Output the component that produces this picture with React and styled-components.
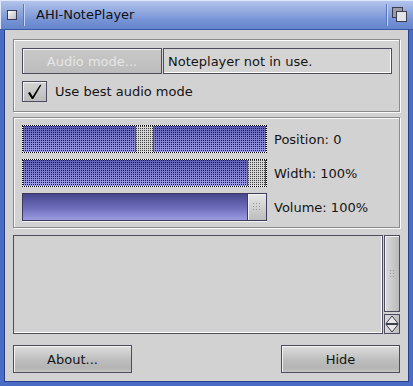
import React from "react";
import styled, { createGlobalStyle } from "styled-components";

const GlobalStyle = createGlobalStyle`
  html, body {
    margin: 0;
    padding: 0;
    overflow: hidden;
    background: #d2d2d2;
  }
  body {
    font-family: "DejaVu Sans", "Liberation Sans", sans-serif;
    font-size: 13px;
    color: #141414;
  }
`;

const dots = (color, size) =>
  `conic-gradient(from 270deg at 1px 1px, ${color} 25%, transparent 0) 0 0 / ${size}px ${size}px`;

const Window = styled.div`
  width: 413px;
  height: 386px;
  display: flex;
  flex-direction: column;
`;

const TitleBar = styled.div`
  flex: none;
  height: 30px;
  box-sizing: border-box;
  display: flex;
  align-items: center;
  background: linear-gradient(#b6c6ec, #7593d4 70%, #6585cc);
  border-bottom: 1px solid #3a58a6;
  box-shadow: inset 1px 1px 0 #dfe7fb;
`;

const GadgetSlot = styled.div`
  width: ${p => p.$w}px;
  height: 100%;
  display: flex;
  align-items: center;
  justify-content: center;
`;

const CloseBox = styled.div`
  width: 8px;
  height: 8px;
  border: 1px solid #3c3c50;
  background: linear-gradient(135deg, #ffffff, #b8b8c0);
`;

const TitleSep = styled.div`
  width: 1px;
  height: 22px;
  background: #5676c2;
  box-shadow: 1px 0 0 #c9d6f3;
`;

const Title = styled.div`
  flex: 1;
  padding-left: 12px;
  font-size: 13px;
  color: #101018;
`;

const Body = styled.div`
  flex: 1;
  display: flex;
  flex-direction: column;
  padding: 9px;
  background: #d2d2d2;
  border: 4px solid #4a6cc4;
  border-top: none;
  box-shadow: inset 1px 0 0 #28408c, inset -1px 0 0 #28408c, inset 0 -1px 0 #28408c;
`;

const Group = styled.div`
  border: 1px solid #8a8a8a;
  box-shadow: inset 1px 1px 0 #fafafa, 1px 1px 0 #fafafa;
  padding: ${p => p.$pad};
  margin-top: ${p => p.$mt || 0}px;
`;

const ModeGroup = styled(Group)`
  display: flex;
  flex-direction: column;
  gap: 7px;
`;

const ModeRow = styled.div`
  display: flex;
  gap: 1px;
  height: 26px;
`;

const Button = styled.button`
  width: ${p => p.$w}px;
  height: ${p => p.$h || 28}px;
  box-sizing: border-box;
  margin: 0;
  padding: 0;
  border: 1px solid #4c4c5e;
  background: linear-gradient(#dedede, #bdbdbd 55%, #b4b4b4 85%, #c6c6c6);
  box-shadow: inset 1px 1px 0 #f2f2f2;
  font-family: inherit;
  font-size: 13px;
  color: #141414;
  &:disabled {
    color: #e6e6e6;
    background: linear-gradient(#c8c8c8, #bcbcbc);
  }
`;

const TextField = styled.div`
  flex: 1;
  display: flex;
  align-items: center;
  padding-left: 4px;
  border: 1px solid #4c4c5e;
  box-shadow: inset -1px -1px 0 #ffffff;
  background: #d4d4d4;
`;

const CheckRow = styled.label`
  display: flex;
  align-items: center;
  gap: 8px;
  height: 21px;
`;

const CheckBox = styled.div`
  width: 25px;
  height: 21px;
  box-sizing: border-box;
  border: 1px solid #4c4c5e;
  box-shadow: inset 1px 1px 0 #f0f0f0;
  background: linear-gradient(#d4d4d4, #bcbcbc);
  display: flex;
  align-items: center;
  justify-content: center;
`;

const SliderGroup = styled(Group)`
  display: grid;
  grid-template-columns: 245px 1fr;
  grid-auto-rows: 28px;
  column-gap: 7px;
  row-gap: 6px;
`;

const DotTrack = styled.div`
  position: relative;
  box-sizing: border-box;
  border: 1px dotted #000;
  background: #ffffff;
`;

const DotFill = styled.div`
  position: absolute;
  inset: 0;
  background: ${dots("rgba(10,10,40,0.85)", 2)}, linear-gradient(#6262b6, #9c9ce6);
`;

const DotKnob = styled.div`
  position: absolute;
  top: 0;
  bottom: 0;
  width: 19px;
  box-sizing: border-box;
  border-left: 1px solid #505064;
  border-right: 1px solid #505064;
  background: ${dots("#3a3a3a", 2)}, #d8d8d8;
`;

const GaugeTrack = styled.div`
  position: relative;
  box-sizing: border-box;
  border: 1px solid #3c3c5a;
  background: linear-gradient(#46468e, #6e6ebc 55%, #9c9ce2);
  box-shadow: 0 1px 0 #f4f4f4;
`;

const GaugeKnob = styled.div`
  position: absolute;
  top: 0;
  bottom: 0;
  right: 0;
  width: 19px;
  box-sizing: border-box;
  border-left: 1px solid #3c3c5a;
  box-shadow: inset 1px 1px 0 #f4f4f4;
  background: linear-gradient(#e6e6e6, #bdbdbd);
  display: flex;
  align-items: center;
  justify-content: center;
`;

const Grip = styled.div`
  width: ${p => p.$w}px;
  height: ${p => p.$h}px;
  background: ${dots("#9a9a9a", 3)};
`;

const SliderLabel = styled.div`
  display: flex;
  align-items: center;
`;

const ListRow = styled.div`
  display: flex;
  gap: 1px;
  height: 99px;
  margin-top: 7px;
`;

const ListBox = styled.div`
  flex: 1;
  border: 1px solid #4c4c5e;
  box-shadow: inset -1px -1px 0 #ffffff;
  background: #d2d2d2;
`;

const ScrollBar = styled.div`
  width: 16px;
  display: flex;
  flex-direction: column;
  gap: 2px;
`;

const ScrollKnob = styled.div`
  flex: 1;
  box-sizing: border-box;
  border: 1px solid #4c4c5e;
  box-shadow: inset 1px 1px 0 #f0f0f0;
  background: linear-gradient(90deg, #dadada, #bababa);
  display: flex;
  align-items: center;
  justify-content: center;
`;

const ArrowBox = styled.div`
  height: 20px;
  box-sizing: border-box;
  border: 1px solid #4c4c5e;
  background: linear-gradient(90deg, #dadada, #bcbcbc);
  display: flex;
  align-items: center;
  justify-content: center;
`;

const ButtonRow = styled.div`
  display: flex;
  justify-content: space-between;
  margin-top: 11px;
`;

const sliders = [
  { kind: "dot", pos: 0.5, label: "Position: 0" },
  { kind: "dot", pos: 1, label: "Width: 100%" },
  { kind: "gauge", label: "Volume: 100%" }
];

export default function App() {
  return (
    <>
      <GlobalStyle />
      <Window>
        <TitleBar>
          <GadgetSlot $w={23}>
            <CloseBox />
          </GadgetSlot>
          <TitleSep />
          <Title>AHI-NotePlayer</Title>
          <TitleSep />
          <GadgetSlot $w={26}>
            <svg width="16" height="16" viewBox="0 0 16 16">
              <rect x="0.5" y="0.5" width="10" height="10" fill="#9c9ca6" stroke="#3c3c50" />
              <rect x="4.5" y="4.5" width="10" height="10" fill="#e4e4e8" stroke="#3c3c50" />
            </svg>
          </GadgetSlot>
        </TitleBar>
        <Body>
          <ModeGroup $pad="8px 7px 9px 8px">
            <ModeRow>
              <Button $w={140} $h={26} disabled>
                Audio mode...
              </Button>
              <TextField>Noteplayer not in use.</TextField>
            </ModeRow>
            <CheckRow>
              <CheckBox>
                <svg width="15" height="16" viewBox="0 0 15 16">
                  <path d="M1 9 L3 8 L5.6 12.6 L13.2 0.6 L14.2 1.2 L6.2 15 L4.8 15 Z" fill="#000" />
                </svg>
              </CheckBox>
              Use best audio mode
            </CheckRow>
          </ModeGroup>

          <SliderGroup $pad="7px 8px 6px 8px" $mt={5}>
            {sliders.map(s => (
              <React.Fragment key={s.label}>
                {s.kind === "dot" ? (
                  <DotTrack>
                    <DotFill />
                    <DotKnob style={{ left: `calc((100% - 19px) * ${s.pos})` }} />
                  </DotTrack>
                ) : (
                  <GaugeTrack>
                    <GaugeKnob>
                      <Grip $w={8} $h={8} />
                    </GaugeKnob>
                  </GaugeTrack>
                )}
                <SliderLabel>{s.label}</SliderLabel>
              </React.Fragment>
            ))}
          </SliderGroup>

          <ListRow>
            <ListBox />
            <ScrollBar>
              <ScrollKnob>
                <Grip $w={5} $h={8} />
              </ScrollKnob>
              <ArrowBox>
                <svg width="14" height="18" viewBox="0 0 14 18">
                  <path d="M7 1 L13 8.5 L1 8.5 Z" fill="#e8e8e8" stroke="#3c3c50" />
                  <path d="M1 9.5 L13 9.5 L7 17 Z" fill="#e8e8e8" stroke="#3c3c50" />
                </svg>
              </ArrowBox>
            </ScrollBar>
          </ListRow>

          <ButtonRow>
            <Button $w={119}>About...</Button>
            <Button $w={119}>Hide</Button>
          </ButtonRow>
        </Body>
      </Window>
    </>
  );
}
